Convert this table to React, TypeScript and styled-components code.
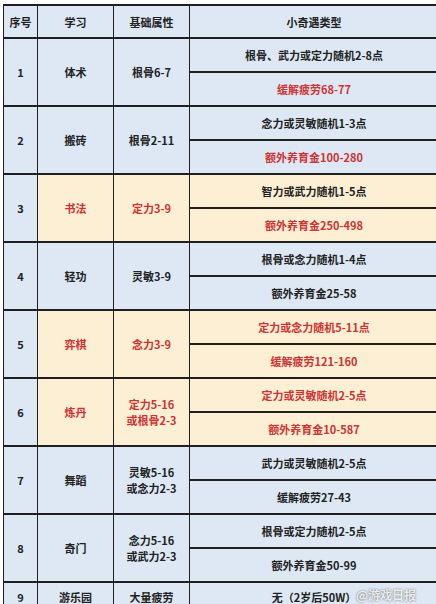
import React from 'react';
import styled, { createGlobalStyle } from 'styled-components';

const colors = {
    blue: '#dde8f4',
    cream: '#fdefd3',
    line: '#1f1f1f',
    text: '#222222',
    red: '#cc3333',
};

type Tone = 'dark' | 'red';

interface Row {
    id: string;
    name: string;
    base: string[];
    cream: boolean;
    tone: Tone;
    height: number;
    events: { text: string; tone: Tone }[];
}

const rows: Row[] = [
    {
        id: '1',
        name: '体术',
        base: ['根骨6-7'],
        cream: false,
        tone: 'dark',
        height: 68,
        events: [
            { text: '根骨、武力或定力随机2-8点', tone: 'dark' },
            { text: '缓解疲劳68-77', tone: 'red' },
        ],
    },
    {
        id: '2',
        name: '搬砖',
        base: ['根骨2-11'],
        cream: false,
        tone: 'dark',
        height: 68,
        events: [
            { text: '念力或灵敏随机1-3点', tone: 'dark' },
            { text: '额外养育金100-280', tone: 'red' },
        ],
    },
    {
        id: '3',
        name: '书法',
        base: ['定力3-9'],
        cream: true,
        tone: 'red',
        height: 68,
        events: [
            { text: '智力或武力随机1-5点', tone: 'dark' },
            { text: '额外养育金250-498', tone: 'red' },
        ],
    },
    {
        id: '4',
        name: '轻功',
        base: ['灵敏3-9'],
        cream: false,
        tone: 'dark',
        height: 68,
        events: [
            { text: '根骨或念力随机1-4点', tone: 'dark' },
            { text: '额外养育金25-58', tone: 'dark' },
        ],
    },
    {
        id: '5',
        name: '弈棋',
        base: ['念力3-9'],
        cream: true,
        tone: 'red',
        height: 68,
        events: [
            { text: '定力或念力随机5-11点', tone: 'red' },
            { text: '缓解疲劳121-160', tone: 'red' },
        ],
    },
    {
        id: '6',
        name: '炼丹',
        base: ['定力5-16', '或根骨2-3'],
        cream: true,
        tone: 'red',
        height: 68,
        events: [
            { text: '定力或灵敏随机2-5点', tone: 'red' },
            { text: '额外养育金10-587', tone: 'red' },
        ],
    },
    {
        id: '7',
        name: '舞蹈',
        base: ['灵敏5-16', '或念力2-3'],
        cream: false,
        tone: 'dark',
        height: 68,
        events: [
            { text: '武力或灵敏随机2-5点', tone: 'dark' },
            { text: '缓解疲劳27-43', tone: 'dark' },
        ],
    },
    {
        id: '8',
        name: '奇门',
        base: ['念力5-16', '或武力2-3'],
        cream: false,
        tone: 'dark',
        height: 68,
        events: [
            { text: '根骨或定力随机2-5点', tone: 'dark' },
            { text: '额外养育金50-99', tone: 'dark' },
        ],
    },
    {
        id: '9',
        name: '游乐园',
        base: ['大量疲劳'],
        cream: false,
        tone: 'dark',
        height: 29,
        events: [{ text: '无（2岁后50W）', tone: 'dark' }],
    },
];

const App = () => {
    return (
        <>
            <GlobalStyle />
            <Page>
                <Table>
                    <Cell $cream={false} $tone="dark" $height={33}>序号</Cell>
                    <Cell $cream={false} $tone="dark" $height={33}>学习</Cell>
                    <Cell $cream={false} $tone="dark" $height={33}>基础属性</Cell>
                    <Cell $cream={false} $tone="dark" $height={33}>小奇遇类型</Cell>

                    {rows.map((row) => (
                        <React.Fragment key={row.id}>
                            <Cell $cream={false} $tone="dark" $height={row.height}>
                                {row.id}
                            </Cell>
                            <Cell $cream={row.cream} $tone={row.tone} $height={row.height}>
                                {row.name}
                            </Cell>
                            <Cell $cream={row.cream} $tone={row.tone} $height={row.height}>
                                <BaseLines>
                                    {row.base.map((line) => (
                                        <span key={line}>{line}</span>
                                    ))}
                                </BaseLines>
                            </Cell>
                            <EventCell $cream={row.cream} $height={row.height}>
                                {row.events.map((event) => (
                                    <EventLine key={event.text} $tone={event.tone}>
                                        {event.text}
                                    </EventLine>
                                ))}
                            </EventCell>
                        </React.Fragment>
                    ))}
                </Table>
                <Watermark>@游戏日报</Watermark>
            </Page>
        </>
    );
};

const GlobalStyle = createGlobalStyle`
    html, body {
        margin: 0;
        padding: 0;
        background: #ffffff;
        overflow: hidden;
    }

    * {
        box-sizing: border-box;
    }
`;

const Page = styled.div`
    position: relative;
    width: 436px;
    height: 604px;
    overflow: hidden;
    padding: 4px 0 0 3px;
    font-family: 'Noto Sans CJK SC', 'Noto Sans', sans-serif;
    font-weight: 700;
    font-size: 11px;
`;

const Table = styled.div`
    display: grid;
    grid-template-columns: 34px 76px 76px 249px;
    width: 435px;
    border-top: 2px solid ${colors.line};
    border-left: 1px solid ${colors.line};
`;

const Cell = styled.div<{ $cream: boolean; $tone: Tone; $height: number }>`
    display: flex;
    align-items: center;
    justify-content: center;
    height: ${({ $height }) => $height}px;
    background: ${({ $cream }) => ($cream ? colors.cream : colors.blue)};
    color: ${({ $tone }) => ($tone === 'red' ? colors.red : colors.text)};
    border-right: 1px solid ${colors.line};
    border-bottom: 2px solid ${colors.line};
    text-align: center;
    white-space: nowrap;
`;

const BaseLines = styled.div`
    display: flex;
    flex-direction: column;
    align-items: center;
    line-height: 16px;
`;

const EventCell = styled.div<{ $cream: boolean; $height: number }>`
    display: flex;
    flex-direction: column;
    height: ${({ $height }) => $height}px;
    background: ${({ $cream }) => ($cream ? colors.cream : colors.blue)};
    border-right: 1px solid ${colors.line};
`;

const EventLine = styled.div<{ $tone: Tone }>`
    flex: 1;
    display: flex;
    align-items: center;
    justify-content: center;
    color: ${({ $tone }) => ($tone === 'red' ? colors.red : colors.text)};
    border-bottom: 2px solid ${colors.line};
    white-space: nowrap;
`;

const Watermark = styled.div`
    position: absolute;
    left: 356px;
    top: 586px;
    font-size: 12px;
    font-weight: 700;
    color: rgba(255, 255, 255, 0.85);
    text-shadow: 0 0 2px rgba(60, 60, 60, 0.8);
    white-space: nowrap;
`;

export default App;
